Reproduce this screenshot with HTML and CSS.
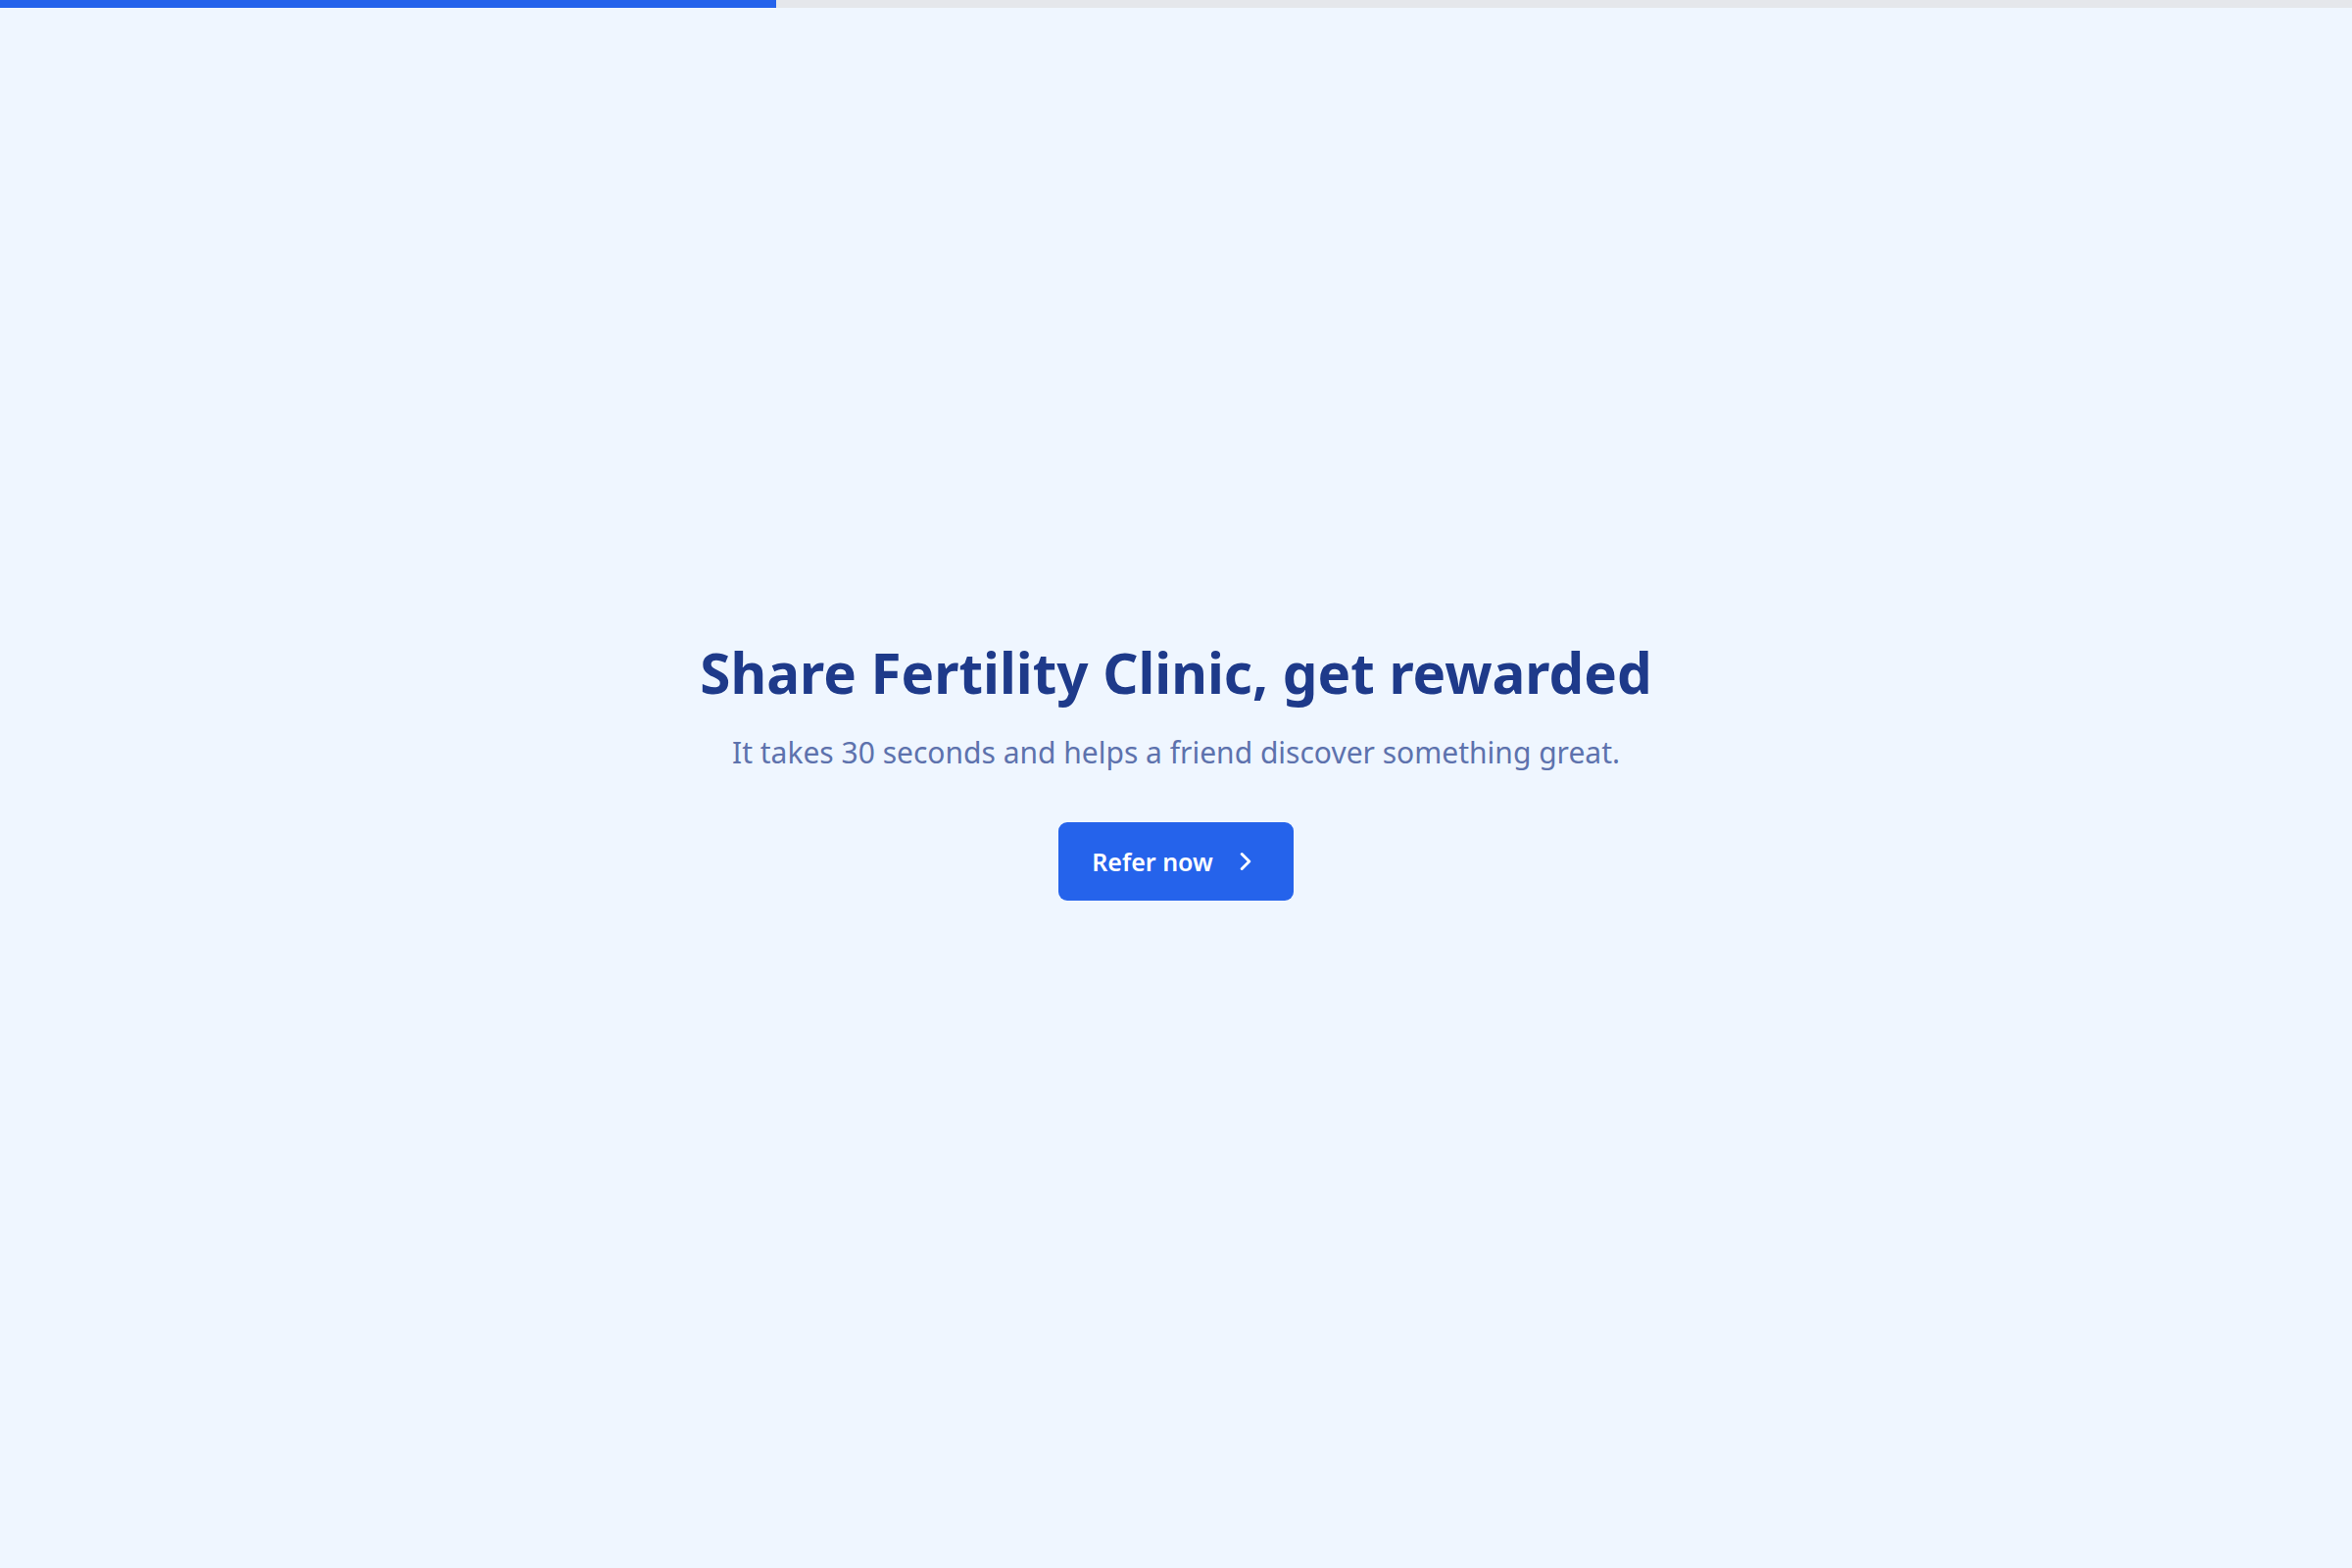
FILE: index.html
```html
<!DOCTYPE html>
<html lang="en">

<head>
    <meta charset="UTF-8">
    <meta name="viewport" content="width=device-width, initial-scale=1.0">
    <title>Refer a friend</title>
    <link rel="stylesheet" href="styles.css">
</head>

<body>
    <div class="progress">
        <div class="progress-fill" style="width: 33%"></div>
    </div>

    <main class="page">
        <div class="hero">
            <h1 class="hero-title">Share Fertility Clinic, get rewarded</h1>
            <p class="hero-text">It takes 30 seconds and helps a friend discover something great.</p>
            <button type="button" class="refer-btn">
                Refer now
                <svg class="refer-icon" viewBox="0 0 24 24" fill="none" stroke="currentColor" stroke-width="2.4"
                    stroke-linecap="round" stroke-linejoin="round">
                    <path d="M9 6l6 6-6 6" />
                </svg>
            </button>
        </div>
    </main>
</body>

</html>
```

FILE: styles.css
```css
/*css*/
html,
body {
    margin: 0;
    padding: 0;
}

body {
    font-family: "Noto Sans", "Open Sans", sans-serif;
    background-color: #eff6ff;
    min-height: 100vh;
}

.progress {
    height: 8px;
    background-color: #e5e7eb;
}

.progress-fill {
    height: 100%;
    background-color: #2563eb;
}

.page {
    min-height: calc(100vh - 8px);
    display: flex;
    justify-content: center;
    align-items: center;
    box-sizing: border-box;
    padding-bottom: 36px;
}

.hero {
    display: flex;
    flex-direction: column;
    align-items: center;
    text-align: center;
}

.hero-title {
    margin: 0;
    font-size: 56.5px;
    font-weight: 700;
    line-height: 1.2;
    color: #1e3a8a;
}

.hero-text {
    margin: 27px 0 0;
    font-size: 30px;
    line-height: 1.4;
    color: #5d72ad;
}

.refer-btn {
    margin-top: 50px;
    display: inline-flex;
    align-items: center;
    gap: 18px;
    padding: 0 34px;
    height: 80px;
    font-family: inherit;
    font-size: 25px;
    font-weight: 600;
    color: #ffffff;
    background-color: #2563eb;
    border: none;
    border-radius: 9px;
    cursor: pointer;
}

.refer-icon {
    width: 30px;
    height: 30px;
}
```
